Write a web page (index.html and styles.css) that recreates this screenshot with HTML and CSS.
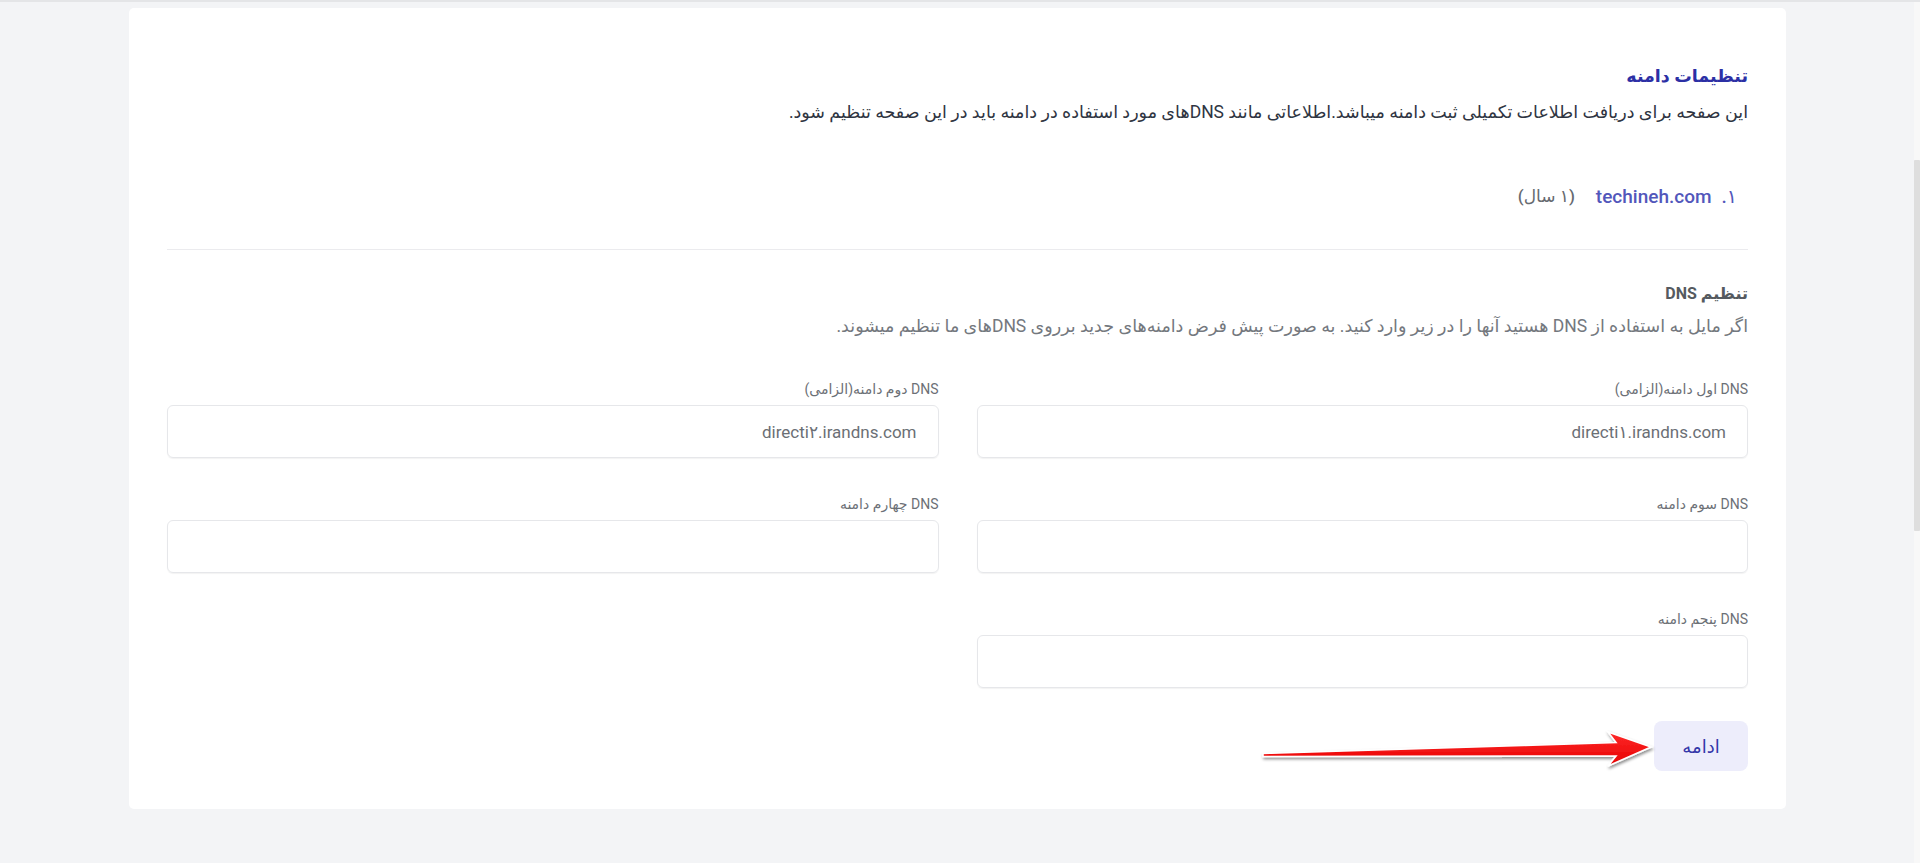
FILE: index.html
```html
<!DOCTYPE html>
<html lang="fa" dir="rtl">
<head>
<meta charset="utf-8">
<title>تنظیمات دامنه</title>
<link rel="stylesheet" href="styles.css">
</head>
<body>
<main class="card">
  <h1 class="title">تنظیمات دامنه</h1>
  <p class="intro">این صفحه برای دریافت اطلاعات تکمیلی ثبت دامنه میباشد.اطلاعاتی مانند DNSهای مورد استفاده در دامنه باید در این صفحه تنظیم شود.</p>

  <div class="domain-row">
    <span class="num">۱.</span>
    <span class="domain">techineh.com</span>
    <span class="period">(۱ سال)</span>
  </div>

  <hr class="divider">

  <h2 class="sub-title">تنظیم DNS</h2>
  <p class="sub-intro">اگر مایل به استفاده از DNS هستید آنها را در زیر وارد کنید. به صورت پیش فرض دامنه‌های جدید برروی DNSهای ما تنظیم میشوند.</p>

  <div class="fields">
    <label class="field">
      <span class="label">DNS اول دامنه(الزامی)</span>
      <span class="input">directi۱.irandns.com</span>
    </label>
    <label class="field">
      <span class="label">DNS دوم دامنه(الزامی)</span>
      <span class="input">directi۲.irandns.com</span>
    </label>
    <label class="field">
      <span class="label">DNS سوم دامنه</span>
      <span class="input"></span>
    </label>
    <label class="field">
      <span class="label">DNS چهارم دامنه</span>
      <span class="input"></span>
    </label>
    <label class="field">
      <span class="label">DNS پنجم دامنه</span>
      <span class="input"></span>
    </label>
  </div>

  <div class="actions">
    <button class="btn" type="button">ادامه</button>
  </div>

  <svg class="arrow" width="410" height="50" viewBox="0 0 410 50" aria-hidden="true">
    <defs>
      <filter id="sh" x="-10%" y="-50%" width="120%" height="200%">
        <feDropShadow dx="1" dy="2" stdDeviation="1.6" flood-color="#000" flood-opacity="0.45"/>
      </filter>
      <linearGradient id="rg" x1="0" y1="0" x2="0" y2="1">
        <stop offset="0" stop-color="#ff2a2a"/>
        <stop offset="1" stop-color="#e60000"/>
      </linearGradient>
    </defs>
    <polygon filter="url(#sh)" fill="url(#rg)" stroke="#ffffff" stroke-width="1.6" stroke-linejoin="miter"
      points="13,28.5 366,17.5 358,7 401,22 358,41 366,31 13,31.5"/>
  </svg>
</main>
<div class="scroll-track"><div class="scroll-thumb"></div></div>
</body>
</html>
```

FILE: styles.css
```css
* { box-sizing: border-box; }

html, body {
  margin: 0;
  padding: 0;
}

body {
  background: #f3f4f6;
  border-top: 2px solid #e4e5e7;
  padding-top: 6px;
  height: 863px;
  overflow: hidden;
  font-family: Roboto, "DejaVu Sans", sans-serif;
  color: #3a3f4b;
}

.card {
  position: relative;
  margin: 0 134px 0 129px;
  background: #ffffff;
  border-radius: 5px;
  padding: 54px 38px 38px 38px;
}

.title {
  margin: 0 0 8px 0;
  font-size: 17.5px;
  line-height: 28px;
  font-weight: 700;
  color: #2c30a5;
}

.intro {
  margin: 0;
  font-size: 17.5px;
  line-height: 28px;
  color: #2f3542;
}

.domain-row {
  display: flex;
  align-items: center;
  margin: 56px 11px 0 0;
  height: 28px;
  font-size: 19px;
}

.num {
  color: #5257bb;
  font-weight: 500;
  margin-left: 10px;
}

.domain {
  color: #5257bb;
  font-weight: 500;
  margin-left: 21px;
}

.period {
  color: #666a70;
  font-size: 17px;
  font-weight: 500;
}

.divider {
  border: 0;
  border-top: 1px solid #ebebee;
  margin: 39px 0 32px 0;
  height: 0;
}

.sub-title {
  margin: 0 0 7px 0;
  font-size: 16px;
  line-height: 24px;
  font-weight: 700;
  color: #555a60;
}

.sub-intro {
  margin: 0;
  font-size: 17.5px;
  line-height: 26px;
  color: #74787e;
}

.fields {
  display: grid;
  grid-template-columns: 1fr 1fr;
  column-gap: 38px;
  row-gap: 36px;
  margin-top: 40px;
}

.field {
  display: flex;
  flex-direction: column;
  gap: 6px;
}

.label {
  font-size: 14px;
  line-height: 20px;
  color: #6c7076;
}

.input {
  display: flex;
  align-items: center;
  height: 53px;
  padding: 0 21px;
  border: 1px solid #e6e7ea;
  border-radius: 6px;
  box-shadow: 0 1px 1px rgba(0, 0, 0, 0.05);
  font-size: 17px;
  color: #6b6f75;
  direction: rtl;
}

.actions {
  display: flex;
  margin-top: 33px;
}

.btn {
  width: 94px;
  height: 50px;
  border: 0;
  border-radius: 8px;
  background: #ededfb;
  color: #3438a9;
  font-family: Roboto, "DejaVu Sans", sans-serif;
  font-size: 18px;
  cursor: pointer;
}

.arrow {
  position: absolute;
  left: 1121px;
  top: 717px;
}

.scroll-track {
  position: fixed;
  top: 2px;
  right: 0;
  width: 6px;
  height: 861px;
  background: #f8f8f8;
}

.scroll-thumb {
  position: absolute;
  top: 158px;
  left: 0;
  width: 6px;
  height: 371px;
  background: #dedede;
  border-radius: 1px;
}
```
